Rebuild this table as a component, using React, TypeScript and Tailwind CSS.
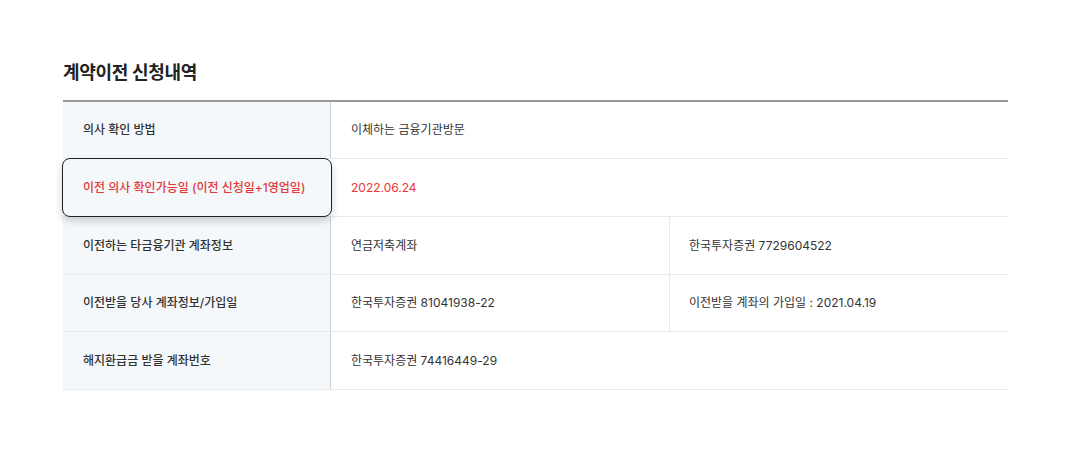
export default function App() {
    const font = { fontFamily: 'Inter, "Noto Sans CJK KR", sans-serif' };
    return (
        <div className="w-[1072px] h-[452px] bg-white" style={font}>
            <div className="pl-[63px] pr-[64px] pt-[60px]">
                <h2 className="text-[18px] leading-[26px] font-bold text-[#222] tracking-[-0.3px]">계약이전 신청내역</h2>

                <div className="mt-[14px] border-t-2 border-[#999]">
                    {/* 의사 확인 방법 */}
                    <div className="flex h-[57px] border-b border-[#eaeaea]">
                        <div className="w-[268px] shrink-0 bg-[#f4f8fb] border-r border-[#cfd3d6] flex items-center pl-[20px] text-[12px] font-medium text-[#333]">
                            의사 확인 방법
                        </div>
                        <div className="flex-1 flex items-center pl-[20px] text-[12px] text-[#333]">
                            이체하는 금융기관방문
                        </div>
                    </div>

                    {/* highlighted row */}
                    <div className="flex h-[58px] border-b border-[#eaeaea]">
                        <div className="relative z-10 w-[270px] -ml-[1px] shrink-0 h-[59px] -mt-[1px] bg-[#f4f8fb] border border-[#222] rounded-[8px] shadow-[0_4px_8px_rgba(0,0,0,0.18)] flex items-center pl-[20px] text-[12px] font-medium text-[#e5383b]">
                            이전 의사 확인가능일 (이전 신청일+1영업일)
                        </div>
                        <div className="flex-1 flex items-center pl-[19px] text-[12px] text-[#ef3434]">
                            2022.06.24
                        </div>
                    </div>

                    {/* 타금융기관 계좌정보 */}
                    <div className="flex h-[58px] border-b border-[#eaeaea]">
                        <div className="w-[268px] shrink-0 bg-[#f4f8fb] border-r border-[#cfd3d6] flex items-center pl-[20px] text-[12px] font-medium text-[#333]">
                            이전하는 타금융기관 계좌정보
                        </div>
                        <div className="w-[339px] shrink-0 border-r border-[#eaeaea] flex items-center pl-[20px] text-[12px] text-[#333]">
                            연금저축계좌
                        </div>
                        <div className="flex-1 flex items-center pl-[19px] text-[12px] text-[#333]">
                            한국투자증권 7729604522
                        </div>
                    </div>

                    {/* 당사 계좌정보 */}
                    <div className="flex h-[57px] border-b border-[#eaeaea]">
                        <div className="w-[268px] shrink-0 bg-[#f4f8fb] border-r border-[#cfd3d6] flex items-center pl-[20px] text-[12px] font-medium text-[#333]">
                            이전받을 당사 계좌정보/가입일
                        </div>
                        <div className="w-[339px] shrink-0 border-r border-[#eaeaea] flex items-center pl-[20px] text-[12px] text-[#333]">
                            한국투자증권 81041938-22
                        </div>
                        <div className="flex-1 flex items-center pl-[19px] text-[12px] text-[#333]">
                            이전받을 계좌의 가입일 : 2021.04.19
                        </div>
                    </div>

                    {/* 해지환급금 */}
                    <div className="flex h-[58px] border-b border-[#eaeaea]">
                        <div className="w-[268px] shrink-0 bg-[#f4f8fb] border-r border-[#cfd3d6] flex items-center pl-[20px] text-[12px] font-medium text-[#333]">
                            해지환급금 받을 계좌번호
                        </div>
                        <div className="flex-1 flex items-center pl-[20px] text-[12px] text-[#333]">
                            한국투자증권 74416449-29
                        </div>
                    </div>
                </div>
            </div>
        </div>
    );
}
